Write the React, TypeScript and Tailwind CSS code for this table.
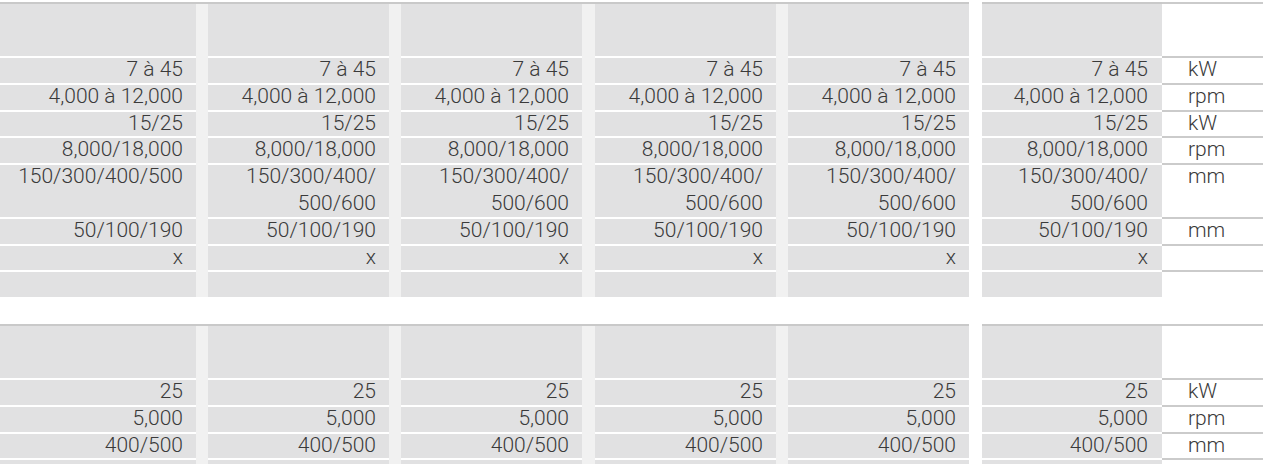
import React from "react";

const W = [196, 181, 181, 181, 181];
const SEP = [12, 12, 13, 12];

type Row = { v: (string | string[])[]; u: string; h?: "double" };

const font = { fontFamily: 'Roboto, "Liberation Sans", Arial, sans-serif' };

function Val({ val }: { val?: string | string[] }) {
  if (Array.isArray(val))
    return (
      <>
        {val.map((l, k) => (
          <div key={k} className="h-[26.6px] leading-[22px]">
            {l}
          </div>
        ))}
      </>
    );
  if (!val) return null;
  return <div className="leading-[22px]">{val}</div>;
}

function DataRow({ row, header }: { row?: Row; header?: boolean }) {
  const double = row?.h === "double";
  const hCls = header ? "h-[54px]" : double ? "h-[53.6px]" : "h-[26.8px]";
  const dataBorder = header ? "border-[#c9c9c9]" : "border-white";
  const vals = row ? row.v : [];
  const cells: React.ReactNode[] = [];
  for (let i = 0; i < 5; i++) {
    cells.push(
      <div
        key={"d" + i}
        style={{ width: W[i] }}
        className={`shrink-0 border-t-2 ${dataBorder} bg-[#e1e1e2] pr-[13px] text-right`}
      >
        <Val val={vals[i]} />
      </div>
    );
    if (i < 4) {
      cells.push(
        <div
          key={"s" + i}
          style={{ width: SEP[i] }}
          className={`shrink-0 bg-[#f1f1f1] ${header ? "border-t-2 border-[#c9c9c9]" : ""}`}
        />
      );
    }
  }
  return (
    <div className={`flex ${hCls}`}>
      {cells}
      <div className="w-[13px] shrink-0 bg-white" />
      <div className={`w-[180px] shrink-0 border-t-2 ${dataBorder} bg-[#e1e1e2] pr-[14px] text-right`}>
        <Val val={vals[5]} />
      </div>
      <div className="w-[101px] shrink-0 border-t-2 border-[#cbcbcb] bg-white pl-[26px]">
        <Val val={row?.u} />
      </div>
    </div>
  );
}

const two = ["150/300/400/", "500/600"];

const table1: Row[] = [
  { v: Array(6).fill("7 à 45"), u: "kW" },
  { v: Array(6).fill("4,000 à 12,000"), u: "rpm" },
  { v: Array(6).fill("15/25"), u: "kW" },
  { v: Array(6).fill("8,000/18,000"), u: "rpm" },
  { v: [["150/300/400/500"], two, two, two, two, two], u: "mm", h: "double" },
  { v: Array(6).fill("50/100/190"), u: "mm" },
  { v: Array(6).fill("x"), u: "" },
];

const table2: Row[] = [
  { v: Array(6).fill("25"), u: "kW" },
  { v: Array(6).fill("5,000"), u: "rpm" },
  { v: Array(6).fill("400/500"), u: "mm" },
  { v: Array(6).fill(""), u: "" },
];

export default function App() {
  return (
    <div
      className="h-[464px] w-[1269px] overflow-hidden bg-white pt-[2px] text-[21px] font-light text-[#3a3a3a]"
      style={font}
    >
      <div>
        <DataRow header />
        {table1.map((r, i) => (
          <DataRow key={i} row={r} />
        ))}
        <div className="flex h-[26.8px]">
          {W.map((w, i) => (
            <React.Fragment key={i}>
              <div style={{ width: w }} className="shrink-0 border-t-2 border-white bg-[#e1e1e2]" />
              {i < 4 && <div style={{ width: SEP[i] }} className="shrink-0 bg-[#f1f1f1]" />}
            </React.Fragment>
          ))}
          <div className="w-[13px] shrink-0 bg-white" />
          <div className="w-[180px] shrink-0 border-t-2 border-white bg-[#e1e1e2]" />
          <div className="w-[101px] shrink-0 border-t-2 border-[#cbcbcb] bg-white" />
        </div>
      </div>
      <div className="mt-[26.8px]">
        <DataRow header />
        {table2.map((r, i) => (
          <DataRow key={i} row={r} />
        ))}
      </div>
    </div>
  );
}
